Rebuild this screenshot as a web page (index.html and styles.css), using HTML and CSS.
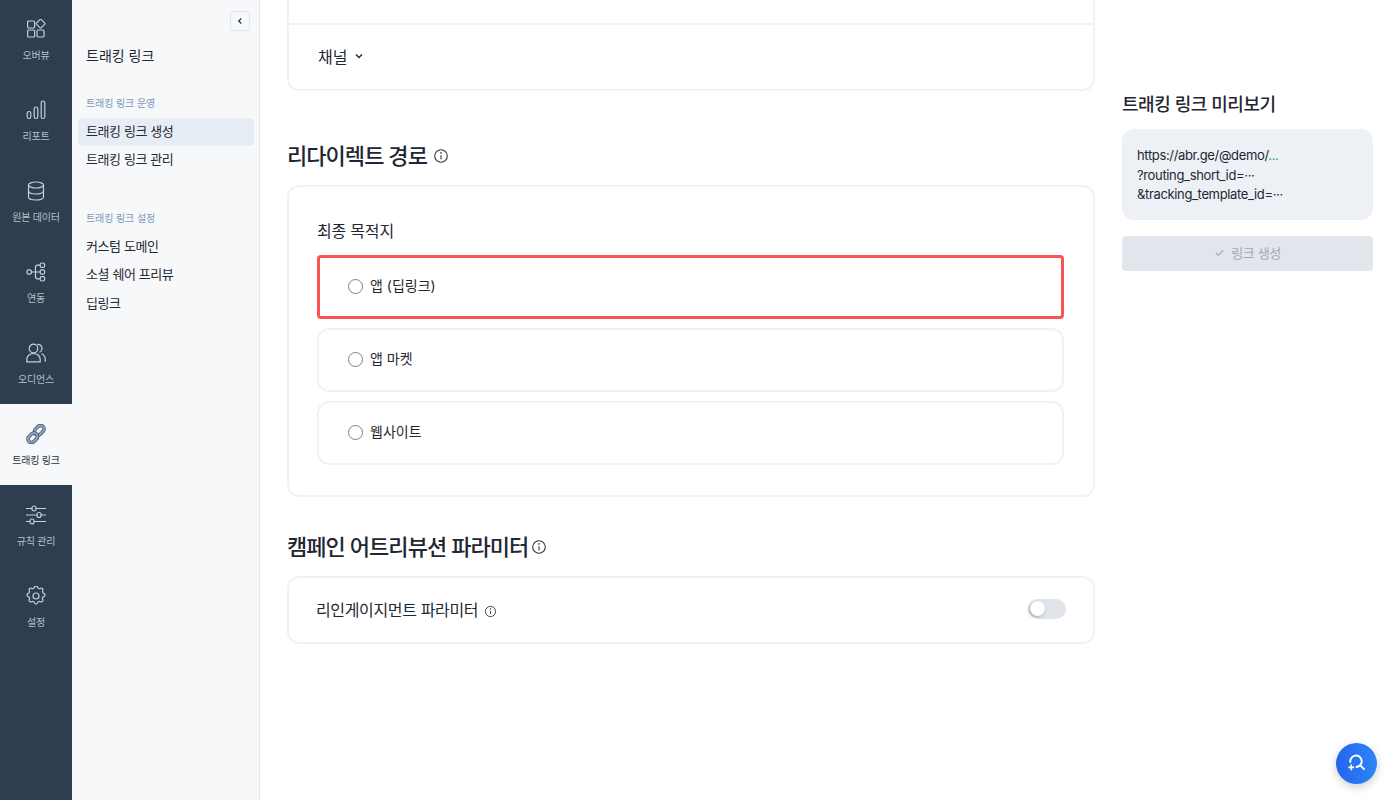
FILE: index.html
```html
<!DOCTYPE html>
<html lang="ko">
<head>
    <meta charset="utf-8" />
    <title>트래킹 링크 생성</title>
    <link rel="stylesheet" href="styles.css">
</head>
<body>
    <div class="app">
        <nav class="rail">
            <a class="rail-item">
                <svg class="rail-icon" viewBox="0 0 20 20"><rect x="1.600" y="2" width="7" height="7" rx="1"/><rect x="11.300" y="1.300" width="6.600" height="6.600" rx="1" transform="rotate(45 14.600 4.600)"/><rect x="1.600" y="11" width="7" height="7" rx="1"/><rect x="11" y="11" width="7" height="7" rx="1"/></svg>
                <span>오버뷰</span>
            </a>
            <a class="rail-item">
                <svg class="rail-icon" viewBox="0 0 20 20"><rect x="1.200" y="11.500" width="3.600" height="7" rx="1.800"/><rect x="8.200" y="7" width="3.600" height="11.500" rx="1.800"/><rect x="15.200" y="1" width="3.600" height="17.500" rx="1.800"/></svg>
                <span>리포트</span>
            </a>
            <a class="rail-item">
                <svg class="rail-icon" viewBox="0 0 20 20"><ellipse cx="10" cy="4" rx="7.500" ry="3"/><path d="M2.500 4v12c0 1.700 3.300 3 7.500 3s7.500-1.300 7.500-3V4"/><path d="M2.500 10c0 1.700 3.300 3 7.500 3s7.500-1.300 7.500-3"/></svg>
                <span>원본 데이터</span>
            </a>
            <a class="rail-item">
                <svg class="rail-icon" viewBox="0 0 20 20"><rect x="1" y="7.800" width="4.400" height="4.400" rx="1.500"/><rect x="14.200" y="1" width="4.400" height="4.400" rx="1.500"/><rect x="14.200" y="7.800" width="4.400" height="4.400" rx="1.500"/><rect x="14.200" y="14.600" width="4.400" height="4.400" rx="1.500"/><path d="M5.400 10h8.800M14.200 3.200h-2.700c-1.100 0-2 .9-2 2v9.600c0 1.100.9 2 2 2h2.700"/></svg>
                <span>연동</span>
            </a>
            <a class="rail-item">
                <svg class="rail-icon" viewBox="0 0 20 20"><circle cx="7.500" cy="5.500" r="4.300"/><path d="M.8 18.800v-2.300c0-3.300 2.600-6 6.700-6s6.700 2.700 6.700 6v2.300z"/><path d="M11.200 1.500c2.500-.7 4.800 1.300 4.800 3.900 0 1.700-1 3.200-2.500 3.900M15.500 10.800c2.300.9 3.800 3.100 3.800 5.700v2.300"/></svg>
                <span>오디언스</span>
            </a>
            <a class="rail-item active">
                <svg class="rail-icon link-icon" viewBox="0 0 20 20">
                    <rect class="ring-edge" x="8" y="2.800" width="10.500" height="7" rx="3.500" transform="rotate(-45 13.200 6.300)"/>
                    <rect class="ring" x="8" y="2.800" width="10.500" height="7" rx="3.500" transform="rotate(-45 13.200 6.300)"/>
                    <rect class="ring-edge" x="1.500" y="10.200" width="10.500" height="7" rx="3.500" transform="rotate(-45 6.800 13.700)"/>
                    <rect class="ring" x="1.500" y="10.200" width="10.500" height="7" rx="3.500" transform="rotate(-45 6.800 13.700)"/>
                </svg>
                <span>트래킹 링크</span>
            </a>
            <a class="rail-item">
                <svg class="rail-icon" viewBox="0 0 20 20"><path d="M0 3.500h6M10 3.500h10M0 10h11M15 10h5M0 16.500h4M8 16.500h12"/><rect x="6" y="1" width="4" height="5" rx="2"/><rect x="11" y="7.500" width="4" height="5" rx="2"/><rect x="4" y="14" width="4" height="5" rx="2"/></svg>
                <span>규칙 관리</span>
            </a>
            <a class="rail-item">
                <svg class="rail-icon" viewBox="2 2 20 20"><path d="M10.300 3.300c.4-1.700 3-1.700 3.400 0a1.700 1.700 0 0 0 2.600 1.100c1.500-.9 3.300.8 2.400 2.400a1.700 1.700 0 0 0 1 2.500c1.800.5 1.800 3 0 3.400a1.700 1.700 0 0 0-1 2.600c.9 1.500-.9 3.300-2.400 2.400a1.700 1.700 0 0 0-2.600 1c-.4 1.800-3 1.800-3.400 0a1.700 1.700 0 0 0-2.600-1c-1.500.9-3.300-.9-2.400-2.400a1.700 1.700 0 0 0-1-2.600c-1.800-.4-1.800-3 0-3.400a1.700 1.700 0 0 0 1-2.500c-.9-1.600.9-3.300 2.400-2.400a1.700 1.700 0 0 0 2.600-1.100z"/><circle cx="12" cy="12" r="3"/></svg>
                <span>설정</span>
            </a>
        </nav>

        <aside class="submenu">
            <button class="collapse-btn">
                <svg viewBox="0 0 10 10"><path d="M6.300 2.500L3.700 5l2.600 2.500"/></svg>
            </button>
            <h2 class="submenu-title">트래킹 링크</h2>
            <div class="submenu-group">
                <h3 class="submenu-label">트래킹 링크 운영</h3>
                <a class="submenu-link selected">트래킹 링크 생성</a>
                <a class="submenu-link">트래킹 링크 관리</a>
            </div>
            <div class="submenu-group">
                <h3 class="submenu-label">트래킹 링크 설정</h3>
                <a class="submenu-link">커스텀 도메인</a>
                <a class="submenu-link">소셜 쉐어 프리뷰</a>
                <a class="submenu-link">딥링크</a>
            </div>
        </aside>

        <main class="content">
            <section class="card channel-card">
                <div class="channel-top"></div>
                <div class="channel-row">
                    <span>채널</span>
                    <svg class="chevron" viewBox="0 0 10 10"><path d="M2 3.600l3 3 3-3"/></svg>
                </div>
            </section>

            <h2 class="section-title first">리다이렉트 경로
                <svg class="info" viewBox="0 0 16 16"><circle cx="8" cy="8" r="6.300"/><path d="M8 7.300v4"/><circle class="dot" cx="8" cy="4.900" r=".8"/></svg>
            </h2>
            <section class="card target-card">
                <div class="target-label">최종 목적지</div>
                <label class="option error"><span class="radio"></span>앱 (딥링크)</label>
                <label class="option"><span class="radio"></span>앱 마켓</label>
                <label class="option"><span class="radio"></span>웹사이트</label>
            </section>

            <h2 class="section-title tight">캠페인 어트리뷰션 파라미터
                <svg class="info" viewBox="0 0 16 16"><circle cx="8" cy="8" r="6.300"/><path d="M8 7.300v4"/><circle class="dot" cx="8" cy="4.900" r=".8"/></svg>
            </h2>
            <section class="card param-card">
                <span class="param-name">리인게이지먼트 파라미터
                    <svg class="info small" viewBox="0 0 16 16"><circle cx="8" cy="8" r="6.300"/><path d="M8 7.300v4"/><circle class="dot" cx="8" cy="4.900" r=".8"/></svg>
                </span>
                <span class="toggle"><span class="knob"></span></span>
            </section>
        </main>

        <aside class="preview">
            <h2 class="preview-title">트래킹 링크 미리보기</h2>
            <div class="preview-box">
                <div>https://abr.ge/@demo/<span class="green">...</span></div>
                <div>?routing_short_id=···</div>
                <div>&amp;tracking_template_id=···</div>
            </div>
            <button class="create-btn">
                <svg viewBox="0 0 12 12"><path d="M2 6.500l2.700 2.700L10 3.500"/></svg>
                링크 생성
            </button>
        </aside>
    </div>

    <button class="fab">
        <svg viewBox="0 0 20 20"><path d="M3.700 9.200A6 6 0 1 1 9.200 13.600"/><path d="M14 12l4.500 4.500"/><path class="plus" d="M4.500 11v6M1.500 14h6"/></svg>
    </button>
</body>
</html>
```

FILE: styles.css
```css
* {
    margin: 0;
    padding: 0;
    box-sizing: border-box;
}

body {
    font-family: Inter, "Noto Sans CJK KR", sans-serif;
    background: #fff;
    color: #1f2733;
    height: 800px;
    overflow: hidden;
}

.app {
    display: flex;
    height: 800px;
}

.rail {
    width: 72px;
    flex-shrink: 0;
    background: #2f3e4e;
}

.rail-item {
    height: 81px;
    display: flex;
    flex-direction: column;
    align-items: center;
    padding-top: 20px;
    font-size: 10px;
    line-height: 14px;
    letter-spacing: -0.2px;
    color: #b4bfcb;
}

.rail-item:first-child {
    margin-top: -1px;
}

.rail-icon {
    width: 20px;
    height: 20px;
    margin-bottom: 9px;
    fill: none;
    stroke: #c3cfdc;
    stroke-width: 1.2;
}

.rail-item.active {
    background: #f6f8fa;
    color: #2b3440;
}

.ring-edge {
    stroke: #3d4e63;
    stroke-width: 3.600;
}

.ring {
    stroke: #8ba3c2;
    stroke-width: 2.200;
}

.submenu {
    width: 188px;
    flex-shrink: 0;
    position: relative;
    background: #f6f8fa;
    border-right: 1px solid #e4e7ec;
    padding: 47px 5px 0 6px;
}

.collapse-btn {
    position: absolute;
    top: 11px;
    right: 9px;
    width: 20px;
    height: 20px;
    background: #f6f8fa;
    border: 1px solid #e2e6ec;
    border-radius: 3px;
    display: flex;
    align-items: center;
    justify-content: center;
}

.collapse-btn svg {
    width: 10px;
    height: 10px;
    fill: none;
    stroke: #2b3440;
    stroke-width: 1.2;
}

.submenu-title {
    font-size: 14px;
    line-height: 18px;
    font-weight: 400;
    padding-left: 8px;
    margin-bottom: 31px;
}

.submenu-group {
    margin-bottom: 36px;
}

.submenu-label {
    font-size: 10px;
    line-height: 14px;
    font-weight: 400;
    letter-spacing: -0.1px;
    color: #7c98b6;
    padding-left: 8px;
    margin-bottom: 8px;
}

.submenu-link {
    display: block;
    height: 28.500px;
    line-height: 27px;
    font-size: 13px;
    letter-spacing: -0.4px;
    padding-left: 8px;
    border-radius: 4px;
    color: #1f2733;
}

.submenu-link.selected {
    background: #e7edf4;
    height: 28px;
}

.content {
    width: 862px;
    flex-shrink: 0;
    padding-left: 27px;
}

.card {
    width: 808px;
    background: #fff;
    border: 2px solid #f1f2f6;
    border-radius: 12px;
}

.channel-card {
    height: 91px;
    border-top: none;
    border-top-left-radius: 0;
    border-top-right-radius: 0;
}

.channel-top {
    height: 25px;
    border-bottom: 2px solid #f1f2f6;
}

.channel-row {
    display: flex;
    align-items: center;
    gap: 7px;
    height: 62px;
    padding-left: 29px;
    font-size: 16px;
}

.chevron {
    width: 10px;
    height: 10px;
    fill: none;
    stroke: #1f2733;
    stroke-width: 1.4;
}

.section-title {
    display: flex;
    align-items: center;
    gap: 6px;
    font-size: 22px;
    line-height: 30px;
    font-weight: 500;
    letter-spacing: -0.95px;
    color: #1f2733;
}

.section-title.first {
    margin: 50px 0 14px;
}

.section-title.tight {
    gap: 3px;
    margin: 35px 0 14px;
}

.info {
    width: 16px;
    height: 16px;
    fill: none;
    stroke: #2b3440;
    stroke-width: 1.1;
}

.info.small {
    width: 13px;
    height: 13px;
    margin-left: 2px;
    vertical-align: -2px;
}

.dot {
    fill: #2b3440;
    stroke: none;
}

.target-card {
    height: 312px;
    padding: 32px 30px 0 28px;
}

.target-label {
    font-size: 16px;
    line-height: 24px;
    letter-spacing: -0.2px;
    margin-bottom: 12px;
}

.option {
    display: flex;
    align-items: center;
    gap: 7px;
    width: 747px;
    height: 64px;
    margin-bottom: 9px;
    padding: 0 0 4px 29px;
    border: 2px solid #f1f2f6;
    border-radius: 12px;
    font-size: 14px;
}

.option.error {
    border: 3px solid #fb5457;
    border-radius: 4px;
    padding-left: 28px;
}

.radio {
    width: 15px;
    height: 15px;
    margin-top: 2px;
    border: 1px solid #7b8189;
    border-radius: 50%;
    background: #fff;
}

.param-card {
    height: 68px;
    display: flex;
    align-items: center;
    justify-content: space-between;
    padding: 0 27px 3px 27px;
}

.param-name {
    font-size: 16px;
    letter-spacing: -0.35px;
}

.toggle {
    width: 38px;
    height: 20px;
    background: #dfe3ea;
    border-radius: 10px;
    padding: 2px;
}

.knob {
    display: block;
    width: 15px;
    height: 15px;
    background: #fff;
    border-radius: 50%;
    box-shadow: -1px 1px 3px rgba(60, 70, 90, 0.4);
}

.preview {
    width: 251px;
    flex-shrink: 0;
    padding-top: 93px;
}

.preview-title {
    font-size: 18px;
    line-height: 24px;
    font-weight: 500;
    letter-spacing: -0.45px;
    margin-bottom: 12px;
}

.preview-box {
    height: 91px;
    background: #edf0f5;
    border-radius: 12px;
    padding: 17px 15px 0;
    font-size: 13px;
    line-height: 19.500px;
    letter-spacing: -0.35px;
    color: #1f2733;
    white-space: nowrap;
}

.green {
    color: #1fb75c;
}

.create-btn {
    display: flex;
    align-items: center;
    justify-content: center;
    gap: 6px;
    width: 100%;
    height: 35px;
    margin-top: 16px;
    padding-bottom: 2px;
    background: #e2e6ec;
    border: none;
    border-radius: 4px;
    font-family: inherit;
    font-size: 13px;
    letter-spacing: -0.4px;
    color: #a0a8b3;
}

.create-btn svg {
    width: 11px;
    height: 11px;
    fill: none;
    stroke: #a0a8b3;
    stroke-width: 1.2;
}

.fab {
    position: absolute;
    left: 1336px;
    top: 743px;
    width: 41px;
    height: 41px;
    border: none;
    border-radius: 50%;
    background: linear-gradient(90deg, #2364ee, #2e86f5);
    box-shadow: 0 3px 10px rgba(0, 0, 0, 0.2);
    display: flex;
    align-items: center;
    justify-content: center;
}

.fab svg {
    width: 19px;
    height: 19px;
    fill: none;
    stroke: #fff;
    stroke-width: 2;
}

.fab .plus {
    stroke-width: 1.800;
}
```
